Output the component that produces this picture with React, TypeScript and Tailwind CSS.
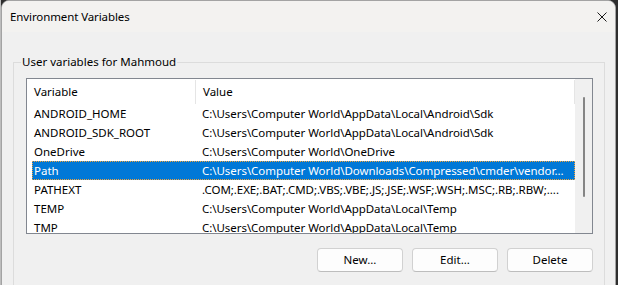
import React from "react";

const rows: [string, string][] = [
  ["ANDROID_HOME", "C:\\Users\\Computer World\\AppData\\Local\\Android\\Sdk"],
  ["ANDROID_SDK_ROOT", "C:\\Users\\Computer World\\AppData\\Local\\Android\\Sdk"],
  ["OneDrive", "C:\\Users\\Computer World\\OneDrive"],
  ["Path", "C:\\Users\\Computer World\\Downloads\\Compressed\\cmder\\vendor..."],
  ["PATHEXT", ".COM;.EXE;.BAT;.CMD;.VBS;.VBE;.JS;.JSE;.WSF;.WSH;.MSC;.RB;.RBW;...."],
  ["TEMP", "C:\\Users\\Computer World\\AppData\\Local\\Temp"],
  ["TMP", "C:\\Users\\Computer World\\AppData\\Local\\Temp"],
];

function Row({ name, value, selected }: { name: string; value: string; selected?: boolean }) {
  return (
    <div
      className={
        selected
          ? "flex h-[19px] shrink-0 items-center bg-[#0078d7] text-white border border-dotted border-[#f2a33a] min-w-0"
          : "flex h-[19px] shrink-0 items-center border border-transparent min-w-0"
      }
    >
      <div className="w-[168px] shrink-0 pl-[1px] whitespace-nowrap leading-[17px]">{name}</div>
      <div className="pl-[1px] whitespace-nowrap overflow-hidden min-w-0 flex-1 leading-[17px] tracking-[-0.05px]">
        {value}
      </div>
    </div>
  );
}

export default function App() {
  return (
    <div className="w-[618px] h-[285px] flex bg-[#2e2e2e] overflow-hidden font-['Noto_Sans',sans-serif] text-[11.5px] text-black leading-none">
      <div className="w-px h-full shrink-0 bg-[#bdbdbd]" />
      <div className="w-[615px] h-[320px] shrink-0 rounded-t-[8px] border border-[#a3a3a3] bg-[#f0f0f0] flex flex-col overflow-hidden">
        <div className="h-[31px] shrink-0 bg-[#f3f2f0] flex items-center justify-between pl-[8px] pr-[8px]">
          <span className="text-[11.5px] tracking-[-0.1px] leading-[16px]">Environment Variables</span>
          <svg width="10" height="10" viewBox="0 0 10 10">
            <path d="M0.5 0.5 L9.5 9.5 M9.5 0.5 L0.5 9.5" stroke="#1a1a1a" strokeWidth="1" fill="none" />
          </svg>
        </div>
        <fieldset className="ml-[11px] mt-[22px] w-[592px] min-w-0 border border-[#dcdcdc] pl-[12px] pr-[11px]">
          <legend className="-ml-[5px] px-[1px] leading-[16px]">User variables for Mahmoud</legend>
          <div className="mt-[8px] w-[567px] h-[156px] border border-[#828790] bg-white flex overflow-hidden">
            <div className="w-[548px] shrink-0 min-w-0 overflow-hidden pl-[5px] flex flex-col">
              <div className="h-[25px] shrink-0 flex items-center">
                <div className="w-[163px] shrink-0 pl-[2px] leading-[17px]">Variable</div>
                <div className="w-px h-[24px] bg-[#e5e5e5] mr-[6px]" />
                <div className="pl-[1px] flex-1 leading-[17px]">Value</div>
                <div className="w-px h-[24px] bg-[#e5e5e5]" />
              </div>
              {rows.map(([n, v]) => (
                <Row key={n} name={n} value={v} selected={n === "Path"} />
              ))}
            </div>
            <div className="w-[17px] shrink-0 bg-[#f0f0f0] flex justify-center pt-[18px]">
              <div className="w-[2px] h-[100px] rounded-full bg-[#858585]" />
            </div>
          </div>
          <div className="mt-[14px] flex justify-end gap-[9px]">
            {["New...", "Edit...", "Delete"].map((b) => (
              <button
                key={b}
                className="w-[86px] h-[24px] rounded-[4px] border border-[#d1d1d1] border-b-[#bdbdbd] bg-[#fdfdfd] text-[11.5px] leading-[16px]"
              >
                {b}
              </button>
            ))}
          </div>
          <div className="h-[40px]" />
        </fieldset>
      </div>
      <div className="w-[2px] h-full shrink-0 bg-[#2e2e2e]" />
    </div>
  );
}
